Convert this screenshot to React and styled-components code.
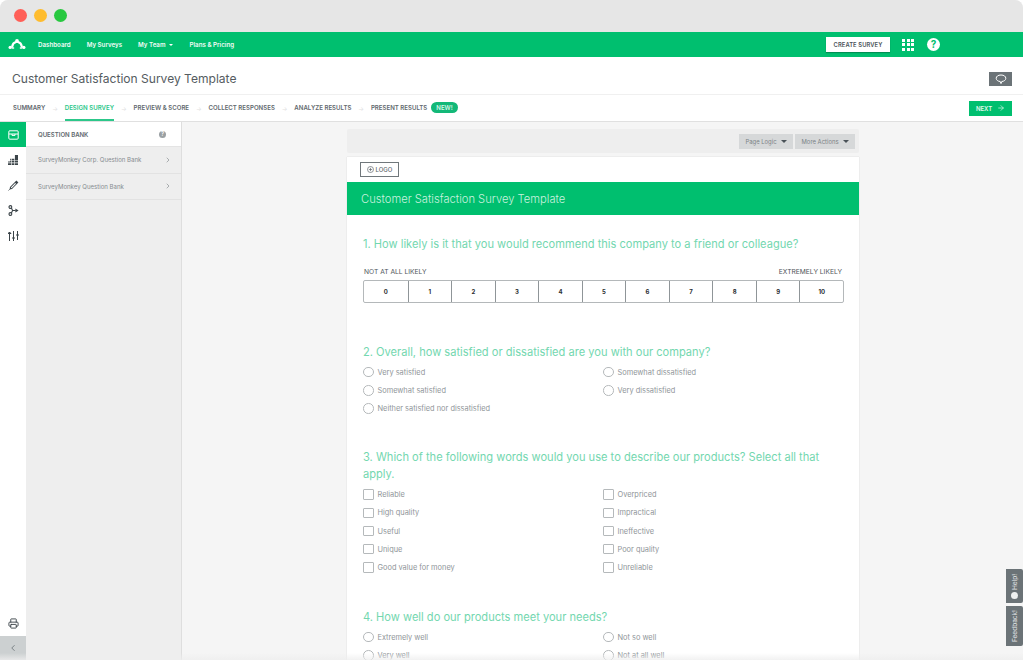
import React from 'react';
import styled, { createGlobalStyle } from 'styled-components';
import { LuChevronRight, LuChevronLeft, LuArrowRight, LuPrinter } from 'react-icons/lu';

const GREEN = '#00bf6f';

const Global = createGlobalStyle`
  html, body { margin: 0; padding: 0; background: #fff; }
  body { font-family: Inter, "Liberation Sans", sans-serif; color: #333e48; }
  * { box-sizing: border-box; }
`;

const Page = styled.div`
  width: 1024px;
  height: 660px;
  overflow: hidden;
  background: #fff;
`;

const Win = styled.div`
  width: 1023px;
  height: 660px;
  display: flex;
  flex-direction: column;
  border-radius: 8px 8px 0 0;
  overflow: hidden;
  background: #f5f5f5;
  position: relative;
`;

const Chrome = styled.div`
  height: 32px;
  flex: none;
  background: #e6e6e6;
  display: flex;
  align-items: center;
  gap: 7px;
  padding: 0 0 1px 14px;
`;

const Dot = styled.span`
  width: 13px;
  height: 13px;
  border-radius: 50%;
  background: ${(p) => p.$c};
`;

const TopBar = styled.div`
  height: 25px;
  flex: none;
  background: ${GREEN};
  display: flex;
  align-items: center;
  padding: 0 0 0 8px;
`;

const NavLink = styled.a`
  color: #f2fbf7;
  font-size: 6.2px;
  font-weight: 600;
  margin-right: 16px;
  display: flex;
  align-items: center;
  gap: 4px;
`;

const Caret = styled.span`
  width: 0;
  height: 0;
  border-left: ${(p) => p.$s || 2}px solid transparent;
  border-right: ${(p) => p.$s || 2}px solid transparent;
  border-top: ${(p) => p.$s || 2}px solid ${(p) => p.$c || '#fff'};
`;

const Logo = styled.svg`
  width: 18px;
  height: 13px;
  margin-right: 12px;
`;

const Right = styled.div`
  margin-left: auto;
  display: flex;
  align-items: center;
  padding-right: 83px;
`;

const CreateBtn = styled.button`
  width: 64px;
  height: 15px;
  border: 0;
  padding: 0;
  background: #fff;
  color: #4a5258;
  font: 600 5.8px Inter, sans-serif;
  letter-spacing: 0.1px;
  box-shadow: 0 1px 1px rgba(0, 0, 0, 0.25);
  margin-right: 12px;
`;

const AppGrid = styled.div`
  display: grid;
  grid-template-columns: repeat(3, 3px);
  grid-auto-rows: 3px;
  gap: 1.5px;
  margin-right: 13px;
  i { background: #fff; }
`;

const HelpDot = styled.div`
  width: 13px;
  height: 13px;
  border-radius: 50%;
  background: #fff;
  color: ${GREEN};
  font: 700 10px Inter, sans-serif;
  text-align: center;
  line-height: 13px;
`;

const TitleRow = styled.div`
  height: 38px;
  flex: none;
  background: #fff;
  border-bottom: 1px solid #f0f0f0;
  display: flex;
  align-items: center;
  justify-content: space-between;
  padding: 6px 11px 0 12px;
`;

const PageTitle = styled.h1`
  margin: 0;
  font-size: 12.05px;
  font-weight: 400;
  color: #555c61;
`;

const CommentBtn = styled.div`
  width: 23px;
  height: 14px;
  background: #6b7377;
  margin-top: 1px;
  display: flex;
  align-items: center;
  justify-content: center;
`;

const TabRow = styled.div`
  height: 27px;
  flex: none;
  background: #fff;
  border-bottom: 1px solid #e0e0e0;
  display: flex;
  align-items: stretch;
  padding: 0 11px 0 13px;
`;

const Tab = styled.div`
  display: flex;
  align-items: center;
  font-size: 6.1px;
  font-weight: 600;
  color: ${(p) => (p.$active ? '#2cc78a' : '#62696e')};
  border-bottom: 2px solid ${(p) => (p.$active ? '#2cc78a' : 'transparent')};
  white-space: nowrap;
`;

const Sep = styled.span`
  display: flex;
  align-items: center;
  justify-content: center;
  width: 19.5px;
  color: #dfe1e2;
  font-size: 6px;
`;

const NewBadge = styled.span`
  margin: 0 0 2px 4px;
  align-self: center;
  background: #13b878;
  color: #d8f6e9;
  border-radius: 6px;
  font-size: 6px;
  font-weight: 600;
  padding: 2px 5px;
`;

const NextBtn = styled.button`
  margin: 0 0 0 auto;
  width: 43px;
  height: 15px;
  align-self: center;
  background: ${GREEN};
  border: 0;
  color: #e4f8ef;
  font: 600 6px Inter, sans-serif;
  display: flex;
  align-items: center;
  justify-content: center;
  gap: 5px;
  padding: 0;
`;

const Main = styled.div`
  flex: 1;
  min-height: 0;
  display: flex;
`;

const Rail = styled.div`
  width: 26px;
  flex: none;
  background: #fff;
  display: flex;
  flex-direction: column;
`;

const RailItem = styled.div`
  height: 25.4px;
  display: flex;
  align-items: center;
  justify-content: center;
  background: ${(p) => (p.$active ? GREEN : 'transparent')};
  color: ${(p) => (p.$active ? '#fff' : '#3b4449')};
`;

const RailBack = styled(RailItem)`
  height: 24px;
  background: #ccd0d1;
  color: #6b7377;
`;

const RailSpacer = styled.div`
  flex: 1;
`;

const Panel = styled.div`
  width: 156px;
  flex: none;
  background: #eeeeee;
  border-right: 1px solid #dedede;
`;

const PanelHead = styled.div`
  height: 25px;
  background: #fff;
  border-bottom: 1px solid #e4e4e4;
  display: flex;
  align-items: center;
  justify-content: space-between;
  padding: 0 15px 0 12px;
  font-size: 6.05px;
  font-weight: 600;
  color: #62696e;
`;

const QMark = styled.span`
  width: 7px;
  height: 7px;
  border-radius: 50%;
  background: #9aa0a3;
  color: #fff;
  font-size: 5.5px;
  line-height: 7px;
  text-align: center;
`;

const PanelRow = styled.div`
  height: 26.5px;
  border-bottom: 1px solid #e2e2e2;
  display: flex;
  align-items: center;
  justify-content: space-between;
  padding: 0 9px 0 12px;
  font-size: 6.05px;
  color: #868c90;
`;

const Canvas = styled.div`
  flex: 1;
  min-width: 0;
  padding: 7px 0 0 165px;
`;

const Column = styled.div`
  width: 512px;
`;

const ToolBar = styled.div`
  height: 24px;
  background: #eeeeee;
  border-radius: 2px;
  display: flex;
  align-items: center;
  justify-content: flex-end;
  gap: 2px;
  padding-right: 4px;
  margin-bottom: 4px;
`;

const ToolBtn = styled.div`
  height: 15px;
  padding: 0 6.5px;
  background: #d6d8d9;
  color: #7b8286;
  font-size: 5.9px;
  display: flex;
  align-items: center;
  gap: 4px;
`;

const Card = styled.div`
  background: #fff;
  box-shadow: 0 0 1px rgba(0, 0, 0, 0.2);
  height: 520px;
`;

const LogoBar = styled.div`
  height: 25px;
  padding: 5px 0 0 13px;
`;

const LogoBtn = styled.div`
  width: 39px;
  height: 15px;
  border: 1px solid #70777b;
  font-size: 6px;
  font-weight: 500;
  color: #62696e;
  display: flex;
  align-items: center;
  justify-content: center;
  gap: 2px;
`;

const Banner = styled.div`
  height: 33px;
  background: ${GREEN};
  color: #c9f1df;
  font-size: 11.2px;
  font-weight: 300;
  display: flex;
  align-items: center;
  padding-left: 14px;
`;

const Body = styled.div`
  padding: 21px 15px 0 16px;
`;

const Question = styled.h2`
  margin: 0;
  font-size: 11.1px;
  line-height: 17.5px;
  font-weight: 400;
  color: #73d7af;
`;

const ScaleLabels = styled.div`
  display: flex;
  justify-content: space-between;
  font-size: 6.7px;
  color: #4f565b;
  margin: 14px 2px 4px 1px;
`;

const Scale = styled.div`
  display: grid;
  grid-template-columns: repeat(11, 1fr);
  height: 23px;
  border: 1px solid #b4b8ba;
  border-radius: 2px;
  margin-bottom: 41px;
`;

const ScaleCell = styled.div`
  display: flex;
  align-items: center;
  justify-content: center;
  font-size: 6px;
  font-weight: 700;
  color: #2b2f33;
  & + & { border-left: 1px solid #8f9598; }
`;

const Options = styled.div`
  display: grid;
  grid-template-columns: 240px 1fr;
  grid-auto-rows: 18.2px;
  margin-top: 2px;
  margin-bottom: ${(p) => p.$mb || 0}px;
`;

const Option = styled.div`
  display: flex;
  align-items: center;
  gap: 4px;
  font-size: 7.4px;
  color: #8f9599;
  grid-column: ${(p) => p.$col};
  grid-row: ${(p) => p.$row};
`;

const Radio = styled.span`
  width: 10.5px;
  height: 10.5px;
  flex: none;
  border: 1px solid #b5b9bb;
  border-radius: 50%;
`;

const Check = styled(Radio)`
  border-radius: 1px;
`;

const SideTab = styled.div`
  position: absolute;
  right: 0;
  top: ${(p) => p.$top}px;
  width: 17px;
  height: ${(p) => p.$h}px;
  background: #6b7377;
  border-radius: 2px 0 0 2px;
  color: #e4e6e7;
  font-size: 6.5px;
  writing-mode: vertical-rl;
  transform: rotate(180deg);
  display: flex;
  align-items: center;
  justify-content: center;
  gap: 2px;
`;

const HelpMark = styled.span`
  width: 7px;
  height: 7px;
  border-radius: 50%;
  background: #eef0f0;
`;

const BottomFade = styled.div`
  position: absolute;
  left: 0;
  right: 0;
  bottom: 0;
  height: 7px;
  background: linear-gradient(rgba(238, 238, 238, 0), rgba(238, 238, 238, 0.8));
`;

const tabs = [
  ['SUMMARY', false],
  ['DESIGN SURVEY', true],
  ['PREVIEW & SCORE', false],
  ['COLLECT RESPONSES', false],
  ['ANALYZE RESULTS', false],
  ['PRESENT RESULTS', false],
];

const q2 = [
  ['Very satisfied', 1, 1],
  ['Somewhat satisfied', 1, 2],
  ['Neither satisfied nor dissatisfied', 1, 3],
  ['Somewhat dissatisfied', 2, 1],
  ['Very dissatisfied', 2, 2],
];

const q3 = [
  ['Reliable', 1, 1],
  ['High quality', 1, 2],
  ['Useful', 1, 3],
  ['Unique', 1, 4],
  ['Good value for money', 1, 5],
  ['Overpriced', 2, 1],
  ['Impractical', 2, 2],
  ['Ineffective', 2, 3],
  ['Poor quality', 2, 4],
  ['Unreliable', 2, 5],
];

const q4 = [
  ['Extremely well', 1, 1],
  ['Very well', 1, 2],
  ['Not so well', 2, 1],
  ['Not at all well', 2, 2],
];

const OptionList = ({ items, Mark, mb }) => (
  <Options $mb={mb}>
    {items.map(([label, col, row]) => (
      <Option key={label} $col={col} $row={row}>
        <Mark />
        {label}
      </Option>
    ))}
  </Options>
);

export default function App() {
  return (
    <Page>
      <Global />
      <Win>
        <Chrome>
          <Dot $c="#ff5f57" />
          <Dot $c="#febc2e" />
          <Dot $c="#28c840" />
        </Chrome>

        <TopBar>
          <Logo viewBox="0 0 18 13" fill="none" stroke="#fff" strokeLinecap="round">
            <path d="M4.2 8.5C4.6 5.6 6.4 4.4 8 4M13.8 8.5C13.4 5.6 11.6 4.4 10 4" strokeWidth="2.2" />
            <circle cx="9" cy="3" r="1.9" fill="#fff" stroke="none" />
            <circle cx="2.2" cy="9.4" r="1.7" fill="#fff" stroke="none" />
            <circle cx="15.8" cy="9.4" r="1.7" fill="#fff" stroke="none" />
            <path d="M4.5 10h1M12.5 10h1" strokeWidth="1.6" />
          </Logo>
          <NavLink>Dashboard</NavLink>
          <NavLink>My Surveys</NavLink>
          <NavLink>
            My Team <Caret />
          </NavLink>
          <NavLink>Plans &amp; Pricing</NavLink>
          <Right>
            <CreateBtn>CREATE SURVEY</CreateBtn>
            <AppGrid>
              {Array.from({ length: 9 }, (_, i) => (
                <i key={i} />
              ))}
            </AppGrid>
            <HelpDot>?</HelpDot>
          </Right>
        </TopBar>

        <TitleRow>
          <PageTitle>Customer Satisfaction Survey Template</PageTitle>
          <CommentBtn>
            <svg width="12" height="11" viewBox="0 0 12 11" fill="none" stroke="#fff" strokeWidth="1">
              <path d="M6 1C3 1 1.2 2.4 1.2 4.3 1.2 6 3 7.4 5.2 7.5L6 9.6 6.8 7.5C9 7.4 10.8 6 10.8 4.3 10.8 2.4 9 1 6 1Z" />
            </svg>
          </CommentBtn>
        </TitleRow>

        <TabRow>
          {tabs.map(([label, active], i) => (
            <React.Fragment key={label}>
              <Tab $active={active}>{label}</Tab>
              {i < tabs.length - 1 && <Sep>→</Sep>}
            </React.Fragment>
          ))}
          <NewBadge>NEW!</NewBadge>
          <NextBtn>
            NEXT <LuArrowRight size={8} />
          </NextBtn>
        </TabRow>

        <Main>
          <Rail>
            <RailItem $active>
              <svg width="11" height="10" viewBox="0 0 11 10" fill="none" stroke="#fff" strokeWidth="1">
                <path d="M2 .8h7a1 1 0 0 1 1.2 1v6.4a1 1 0 0 1-1 1H1.8a1 1 0 0 1-1-1V1.8a1 1 0 0 1 1.2-1ZM.8 4h9.4M4 4v1.4h3V4" />
              </svg>
            </RailItem>
            <RailItem>
              <svg width="10" height="10" viewBox="0 0 10 10" fill="#3b4449">
                <path d="M6.8 0H10v10H0V6.6h2.2V3.8h4.6Z" />
                <path d="M0 7.6h10v.6H0zM0 5.4h10V6H0zM3 3h.6v7H3zM6 0h.6v10H6z" fill="#fff" />
              </svg>
            </RailItem>
            <RailItem>
              <svg width="11" height="11" viewBox="0 0 11 11" fill="#3b4449">
                <path d="M8.4.6 10.4 2.6 4 9 1.6 9.4 2 7Z" />
                <path d="M1.6 9.4.6 10.4" stroke="#3b4449" strokeWidth="1" />
                <path d="M7.2 3 8 3.8 3.6 8.2 2.8 7.4Z" fill="#fff" />
              </svg>
            </RailItem>
            <RailItem>
              <svg width="11" height="11" viewBox="0 0 11 11" fill="none" stroke="#3b4449" strokeWidth="1.1">
                <circle cx="2.4" cy="2" r="1.4" />
                <circle cx="2.4" cy="9" r="1.4" />
                <path d="M3.4 3 4.6 5.5 3.4 8M4.6 5.5h3" />
                <path d="M7.4 3.4l3.2 2.1-3.2 2.1Z" fill="#3b4449" stroke="none" />
              </svg>
            </RailItem>
            <RailItem>
              <svg width="11" height="12" viewBox="0 0 11 12" fill="none" stroke="#3b4449" strokeWidth="1">
                <path d="M1.5 2v9M5.5 1v10M9.5 1v9" />
                <path d="M0 3.5h3M4 8h3M8 5h3M0 3.5l1.5-1.5L3 3.5" />
              </svg>
            </RailItem>
            <RailSpacer />
            <RailItem>
              <LuPrinter size={11} />
            </RailItem>
            <RailBack>
              <LuChevronLeft size={10} />
            </RailBack>
          </Rail>

          <Panel>
            <PanelHead>
              QUESTION BANK
              <QMark>?</QMark>
            </PanelHead>
            <PanelRow>
              SurveyMonkey Corp. Question Bank
              <LuChevronRight size={8} />
            </PanelRow>
            <PanelRow>
              SurveyMonkey Question Bank
              <LuChevronRight size={8} />
            </PanelRow>
          </Panel>

          <Canvas>
            <Column>
              <ToolBar>
                <ToolBtn>
                  Page Logic <Caret $s={3} $c="#4a5258" />
                </ToolBtn>
                <ToolBtn>
                  More Actions <Caret $s={3} $c="#4a5258" />
                </ToolBtn>
              </ToolBar>
              <Card>
                <LogoBar>
                  <LogoBtn>
                    <svg width="7" height="7" viewBox="0 0 7 7" fill="none" stroke="#62696e" strokeWidth="0.7">
                      <circle cx="3.5" cy="3.5" r="3" />
                      <path d="M3.5 1.8v3.4M1.8 3.5h3.4" />
                    </svg>
                    LOGO
                  </LogoBtn>
                </LogoBar>
                <Banner>Customer Satisfaction Survey Template</Banner>
                <Body>
                  <Question>1. How likely is it that you would recommend this company to a friend or colleague?</Question>
                  <ScaleLabels>
                    <span>NOT AT ALL LIKELY</span>
                    <span>EXTREMELY LIKELY</span>
                  </ScaleLabels>
                  <Scale>
                    {Array.from({ length: 11 }, (_, i) => (
                      <ScaleCell key={i}>{i}</ScaleCell>
                    ))}
                  </Scale>
                  <Question>2. Overall, how satisfied or dissatisfied are you with our company?</Question>
                  <OptionList items={q2} Mark={Radio} mb={31} />
                  <Question>3. Which of the following words would you use to describe our products? Select all that apply.</Question>
                  <OptionList items={q3} Mark={Check} mb={32} />
                  <Question>4. How well do our products meet your needs?</Question>
                  <OptionList items={q4} Mark={Radio} />
                </Body>
              </Card>
            </Column>
          </Canvas>
        </Main>

        <SideTab $top={569} $h={34}>
          <HelpMark />
          Help!
        </SideTab>
        <SideTab $top={606} $h={40}>Feedback!</SideTab>
        <BottomFade />
      </Win>
    </Page>
  );
}
